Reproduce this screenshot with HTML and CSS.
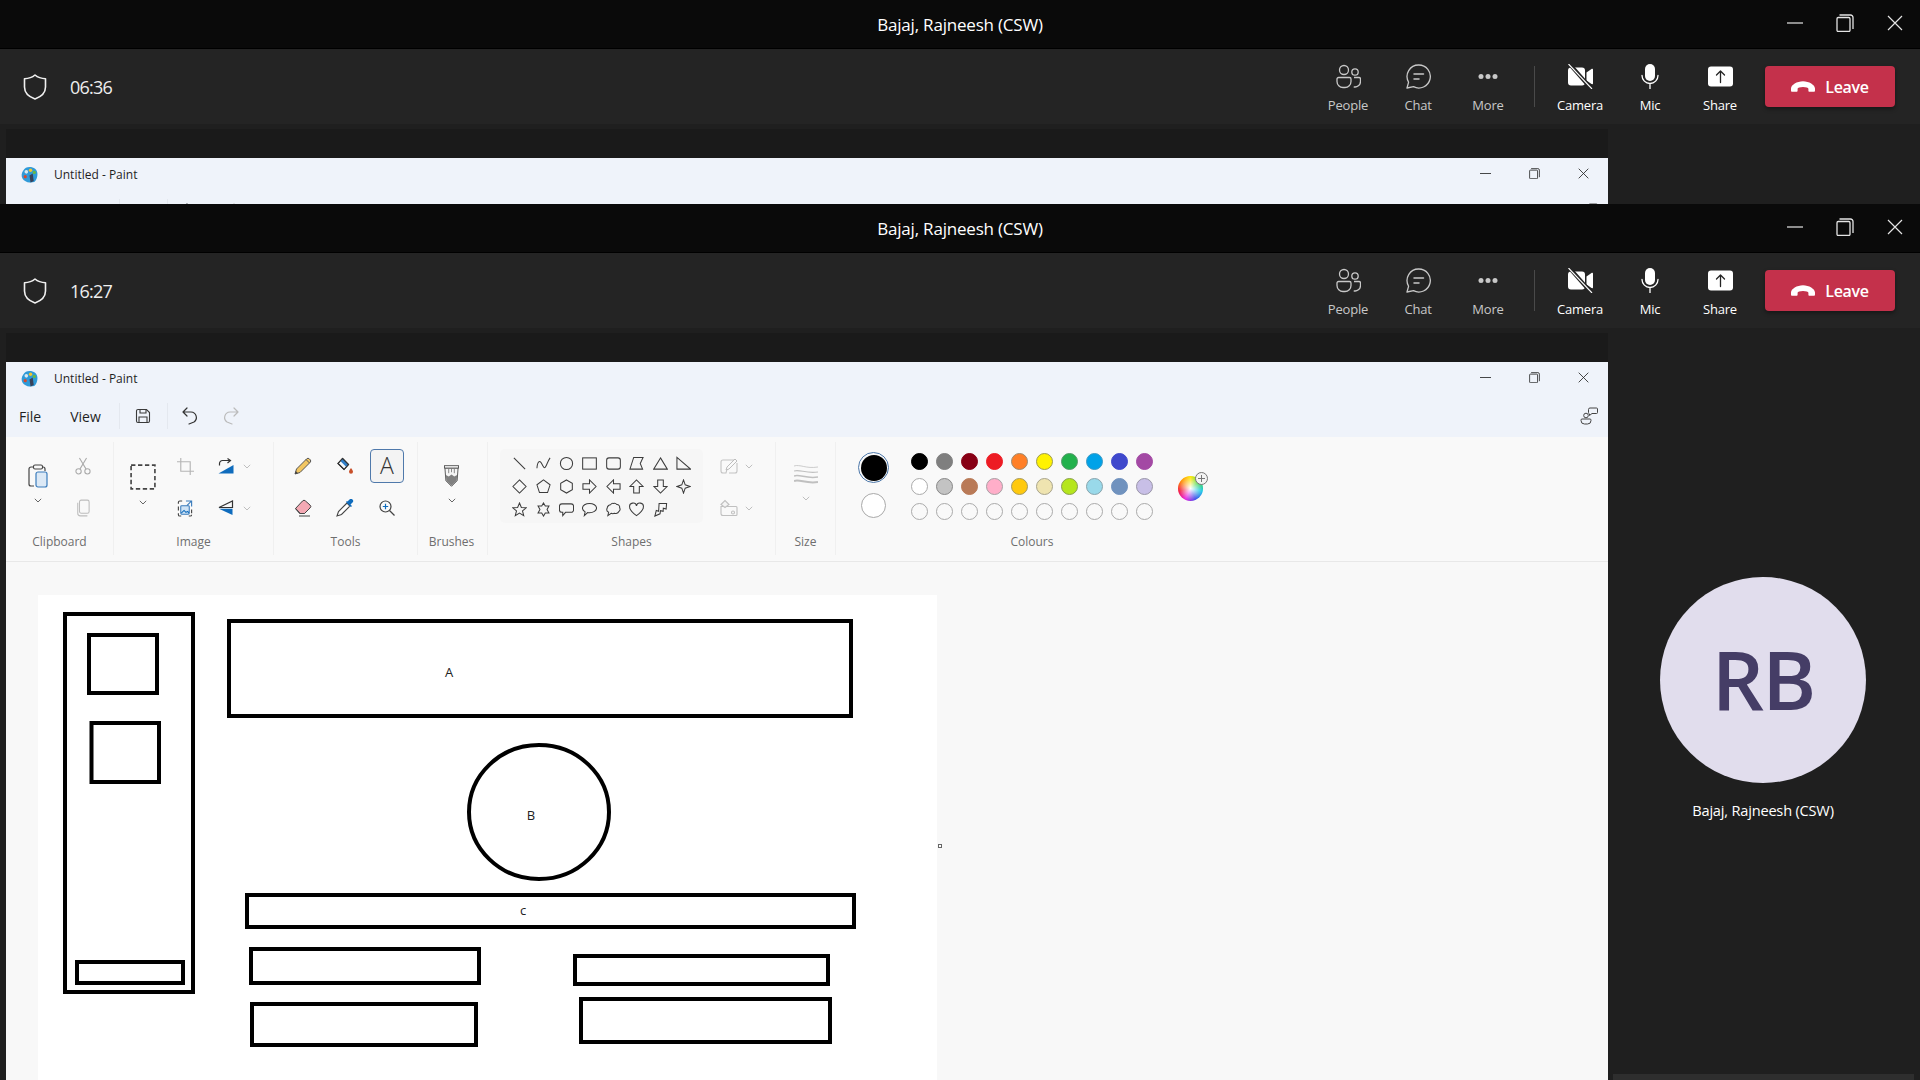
FILE: index.html
```html
<!DOCTYPE html>
<html>
<head>
  <meta charset="utf-8">
  <title>Meeting - Untitled - Paint</title>
  <link rel="stylesheet" href="styles.css">
</head>
<body>

<!-- shared icons -->
<svg class="defs" xmlns="http://www.w3.org/2000/svg">
  <symbol id="i-shield" viewBox="0 0 24 26"><path d="M12 1c3 2.600 6 3.600 10.500 3.700V13c0 6-4.500 9.800-10.500 12C6 22.800 1.500 19 1.500 13V4.700C6 4.600 9 3.600 12 1z" fill="none" stroke="currentColor" stroke-width="1.600" stroke-linejoin="round"/></symbol>
  <symbol id="i-people" viewBox="0 0 25 24"><g fill="none" stroke="currentColor" stroke-width="1.300"><circle cx="8" cy="5.500" r="4.500"/><circle cx="19" cy="7.500" r="3.200"/><path d="M2.500 13h11a1.500 1.500 0 0 1 1.500 1.500V17a6 6 0 0 1-6 6H7a6 6 0 0 1-6-6v-2.500A1.500 1.500 0 0 1 2.500 13z"/><path d="M18 13h5a1.500 1.500 0 0 1 1.500 1.500V17a5.500 5.500 0 0 1-6.800 5.300"/></g></symbol>
  <symbol id="i-chat" viewBox="0 0 25 25"><g fill="none" stroke="currentColor" stroke-width="1.300"><path d="M12.800 1a11.500 11.500 0 1 1-5.300 21.700L1 24l1.600-5.800A11.500 11.500 0 0 1 12.800 1z" stroke-linejoin="round"/><path d="M8 10h9.500M8 15h5" stroke-linecap="round" stroke-width="1.500"/></g></symbol>
  <symbol id="i-more" viewBox="0 0 24 24"><g fill="currentColor"><circle cx="5" cy="12" r="2.500"/><circle cx="12" cy="12" r="2.500"/><circle cx="19" cy="12" r="2.500"/></g></symbol>
  <symbol id="i-camera" viewBox="0 0 25 25"><path d="M3 3.500h11a3 3 0 0 1 3 3v12a3 3 0 0 1-3 3H3a3 3 0 0 1-3-3v-12a3 3 0 0 1 3-3z" fill="currentColor"/><path d="M18.500 8.500l5-3.500c.7-.4 1.500 0 1.500.8v13.400c0 .8-.8 1.200-1.500.8l-5-3.500z" fill="currentColor"/><path d="M1.500 0l22 25" stroke="#242424" stroke-width="4"/><path d="M0.500 0l23.500 25" stroke="currentColor" stroke-width="1.100"/></symbol>
  <symbol id="i-mic" viewBox="0 0 18 25"><rect x="4" y="0" width="10" height="17" rx="5" fill="currentColor"/><path d="M1 11.500a8 8 0 0 0 16 0M9 19.500V25" fill="none" stroke="currentColor" stroke-width="1.300" stroke-linecap="round"/></symbol>
  <symbol id="i-share" viewBox="0 0 25 20"><rect width="25" height="20" rx="3" fill="currentColor"/><path d="M12.500 16V5M8.500 8.500l4-4 4 4" fill="none" stroke="#242424" stroke-width="1.300" stroke-linecap="round" stroke-linejoin="round"/></symbol>
  <symbol id="i-hangup" viewBox="0 0 24 11"><path d="M1.200 10.800C.4 10.800 0 10.200 0 9.500V7.500C0 4 6 .3 12 .3S24 4 24 7.500v2c0 .7-.4 1.300-1.200 1.300h-4.300c-.8 0-1.100-.6-1.100-1.300V7.800C17.400 6.800 15 6 12 6s-5.400.8-5.400 1.800v1.700c0 .7-.3 1.300-1.100 1.300z" fill="currentColor"/></symbol>
  <symbol id="i-min" viewBox="0 0 16 16"><path d="M0 8h16" stroke="currentColor" stroke-width="1.200"/></symbol>
  <symbol id="i-restore" viewBox="0 0 18 18"><g fill="none" stroke="currentColor" stroke-width="1.300"><rect x="1" y="3.500" width="13" height="14" rx="1.200"/><path d="M3.500 1h11a2.500 2.500 0 0 1 2.500 2.500V15"/></g></symbol>
  <symbol id="i-close" viewBox="0 0 16 16"><path d="M1 1l14 14M15 1L1 15" stroke="currentColor" stroke-width="1.200"/></symbol>

  <symbol id="i-logo" viewBox="0 0 16 16"><path d="M8 1c4 0 7.500 2.500 7.500 6.500 0 2.500-1 6-3 7.500L9 15.500C6 16 3 14 1.500 12 0 9.500.5 6.500 2 4.500 3.500 2 5.500 1 8 1z" fill="#2f9ad8"/><circle cx="5" cy="5.500" r="1.700" fill="#d8e9f2"/><circle cx="9" cy="4" r="1.600" fill="#f3c52c"/><circle cx="12.500" cy="6" r="1.500" fill="#69b843"/><circle cx="4" cy="10" r="1.500" fill="#d6492f"/><path d="M8 9l3-2 1 7-3 1.500z" fill="#37425a"/></symbol>
  <symbol id="i-save" viewBox="0 0 16 16"><g fill="none" stroke="#3a3a3a" stroke-width="1.100"><path d="M3 1.500h8.500l3 3V13a1.500 1.500 0 0 1-1.500 1.500H3A1.500 1.500 0 0 1 1.500 13V3A1.500 1.500 0 0 1 3 1.500z"/><path d="M5 1.500V5h6V1.500M4 14.500V9h8v5.500"/></g></symbol>
  <symbol id="i-undo" viewBox="0 0 16 18"><path d="M5 1L1 5l4 4M1 5h8a5.500 5.500 0 0 1 3 10L7 17" fill="none" stroke="currentColor" stroke-width="1.200" stroke-linecap="round" stroke-linejoin="round"/></symbol>
  <symbol id="i-feedback" viewBox="0 0 18 18"><g fill="none" stroke="#444" stroke-width="1"><circle cx="6" cy="8.500" r="2.300"/><path d="M2 12h8a1 1 0 0 1 1 1v.5a3.500 3.500 0 0 1-3.500 3.500h-3A3.500 3.500 0 0 1 1 13.500V13a1 1 0 0 1 1-1z"/><path d="M10 1h6.500a1 1 0 0 1 1 1v3.500a1 1 0 0 1-1 1H12l-2.500 2V7A1.500 1.500 0 0 1 8.500 5.500V2.500A1.500 1.500 0 0 1 10 1z"/></g></symbol>

  <symbol id="i-paste" viewBox="0 0 20 24"><path d="M6 3H3a2 2 0 0 0-2 2v15a2 2 0 0 0 2 2h3M14 3h1a2 2 0 0 1 2 2v2" fill="none" stroke="#444" stroke-width="1.200"/><rect x="5.500" y="1" width="9" height="4" rx="1.500" fill="#f9f9f9" stroke="#444" stroke-width="1.100"/><rect x="8" y="8" width="11" height="15" rx="2" fill="#dce9f6" stroke="#3b7cbc" stroke-width="1.200"/></symbol>
  <symbol id="i-cut" viewBox="0 0 18 20"><g fill="none" stroke="#aaa" stroke-width="1.200"><circle cx="4" cy="16" r="3"/><circle cx="14" cy="16" r="3"/><path d="M5.500 13.500L13 1M12.500 13.500L5 1"/></g></symbol>
  <symbol id="i-copy" viewBox="0 0 16 20"><g fill="none" stroke="#bdbdbd" stroke-width="1.200"><rect x="4" y="1" width="11" height="15" rx="2"/><path d="M2 4v12a3 3 0 0 0 3 3h8"/></g></symbol>
  <symbol id="i-select" viewBox="0 0 24 24"><rect x="1" y="1" width="22" height="22" fill="none" stroke="#444" stroke-width="1.500" stroke-dasharray="4 2.400"/></symbol>
  <symbol id="i-crop" viewBox="0 0 18 18"><path d="M4 0v14h14M0 4h14v14" fill="none" stroke="#b5b5b5" stroke-width="1.200"/></symbol>
  <symbol id="i-rotate" viewBox="0 0 16 16"><path d="M15.500 7v8.500H.5z" fill="#0f6cbd"/><path d="M1.500 7.500V5.500a3 3 0 0 1 3-3H12M9.500 .5l3 2-3 2.500" fill="none" stroke="#333" stroke-width="1.200"/></symbol>
  <symbol id="i-resize" viewBox="0 0 16 18"><g fill="none"><path d="M1 4V2.500A1.500 1.500 0 0 1 2.500 1H5M1 7v4M15 10v4M1 14v1.500A1.500 1.500 0 0 0 2.500 17H4M12 17h1.500a1.500 1.500 0 0 0 1.500-1.500" stroke="#444" stroke-width="1.200"/><path d="M9 1h6v6M15 1l-5 5" stroke="#3b7cbc" stroke-width="1.200"/><rect x="3.500" y="6" width="9" height="9" rx="1" fill="#cfe3f5" stroke="#3b7cbc" stroke-width="1.100"/><path d="M4 14l3-3 2 2 2-1 1 2" stroke="#0f6cbd" stroke-width="1.100"/></g></symbol>
  <symbol id="i-flip" viewBox="0 0 16 16"><path d="M14.500 1v6.500H1z" fill="none" stroke="#333" stroke-width="1.200"/><path d="M14.500 15V8.800H1z" fill="#0f6cbd"/></symbol>
  <symbol id="i-pencil" viewBox="0 0 18 18"><path d="M1 17l1.500-5L12.500 2a2 2 0 0 1 3 0l.5.500a2 2 0 0 1 0 3L6 15.500z" fill="#f2c661" stroke="#555" stroke-width="1"/><path d="M1 17l.8-3 2.200 2.200z" fill="#444"/><path d="M12 2.500l3.500 3.500" stroke="#555"/></symbol>
  <symbol id="i-fill" viewBox="0 0 18 18"><path d="M6.500 1.500l6 6-4.500 5L2 6.500z" fill="#f4f8fc" stroke="#333" stroke-width="1.100"/><path d="M6.500 1.500l6 6-2.200 2.500-6-6z" fill="#2f7fc9"/><path d="M6.500 1.500l6 6-4.500 5L2 6.500z" fill="none" stroke="#333" stroke-width="1.100"/><path d="M15 11c1 1.500 2 2.700 2 3.800a2 2 0 0 1-4 0c0-1.100 1-2.300 2-3.800z" fill="#c8502a"/></symbol>
  <symbol id="i-eraser" viewBox="0 0 18 18"><path d="M1.500 9.500l7-7.500a2 2 0 0 1 3 0l4.500 4a2 2 0 0 1 0 3l-5.500 5.500H6z" fill="#f4a9b4" stroke="#444" stroke-width="1"/><path d="M1.500 9.500L6 14.500h4.500M5 17h11" fill="none" stroke="#444" stroke-width="1.100"/></symbol>
  <symbol id="i-picker" viewBox="0 0 18 18"><path d="M11 4L2.500 12.500 1 17l4.500-1.500L14 7z" fill="#fff" stroke="#444" stroke-width="1.100"/><path d="M10 3l5 5 1-1-1.500-1.500 2-2a2 2 0 0 0-3-3l-2 2L11 2z" fill="#0f6cbd"/></symbol>
  <symbol id="i-zoom" viewBox="0 0 16 16"><g fill="none" stroke="#444" stroke-width="1.200"><circle cx="6.500" cy="6.500" r="5.500"/><path d="M10.500 10.500L15.500 15.500"/></g><path d="M6.500 3.800v5.400M3.800 6.500h5.400" stroke="#0f6cbd" stroke-width="1.200"/></symbol>
  <symbol id="i-brush" viewBox="0 0 16 24"><path d="M1 3.500h14L14 17l-6 6-6-6z" fill="#f6f6f6" stroke="#555" stroke-width="1"/><path d="M2 11l3 1.500 3-2 3 2 3-1.500-.4 6L8 22.500 2.400 17z" fill="#808080"/><rect x=".5" y="1" width="15" height="2.500" fill="#fff" stroke="#555" stroke-width="1"/><path d="M5 4v5M8 4v4M11 4v5" stroke="#777" stroke-width=".9"/></symbol>
  <symbol id="i-outline" viewBox="0 0 18 16"><path d="M3 2h11l-7 9-1 4H3a2 2 0 0 1-2-2V4a2 2 0 0 1 2-2zM17 5v8a2 2 0 0 1-2 2H9" fill="none" stroke="#c4c4c4" stroke-width="1.100"/><path d="M15 1l2 2-8 8-3 1 1-3z" fill="#fafafa" stroke="#bdbdbd"/></symbol>
  <symbol id="i-shapefill" viewBox="0 0 18 17"><g fill="none" stroke="#c0c0c0" stroke-width="1.100"><path d="M1 7h15a1 1 0 0 1 1 1v7a1 1 0 0 1-1 1H3a2 2 0 0 1-2-2z"/><path d="M1 5l4-4 4 4-4 3z" fill="#f4f4f4"/><circle cx="13" cy="13" r="1.500"/></g></symbol>
  <symbol id="i-size" viewBox="0 0 24 20"><g fill="none" stroke="#c0c0c0"><path d="M0 2c6-2 12 3 24 1" stroke-width=".8"/><path d="M0 7c6-2 12 3 24 1" stroke-width="1.100"/><path d="M0 12c6-2 12 3 24 1" stroke-width="1.500"/><path d="M0 17c6-2 12 3 24 1" stroke-width="2"/></g></symbol>
  <symbol id="i-chev" viewBox="0 0 8 5"><path d="M.8.800L4 4l3.200-3.200" fill="none" stroke="currentColor" stroke-width=".9"/></symbol>

  <symbol id="s-line" viewBox="0 0 16 16"><path d="M2 2l12 12"/></symbol>
  <symbol id="s-curve" viewBox="0 0 16 16"><path d="M1 13C1.500 6 4 4 6 8s3 6 4.500 3S13 5 15 2"/></symbol>
  <symbol id="s-oval" viewBox="0 0 16 16"><circle cx="8" cy="8" r="6.500"/></symbol>
  <symbol id="s-rect" viewBox="0 0 16 16"><rect x=".7" y="2" width="14.600" height="12"/></symbol>
  <symbol id="s-round" viewBox="0 0 16 16"><rect x=".7" y="2" width="14.600" height="12" rx="2.500"/></symbol>
  <symbol id="s-poly" viewBox="0 0 16 16"><path d="M5 1.500h10l-3 6.500 2.500 6H1z"/></symbol>
  <symbol id="s-tri" viewBox="0 0 16 16"><path d="M8 2l7.300 12H.7z"/></symbol>
  <symbol id="s-right" viewBox="0 0 16 16"><path d="M1 1.500L15.500 14H1z"/></symbol>
  <symbol id="s-diamond" viewBox="0 0 16 16"><path d="M8 1l7 7-7 7-7-7z"/></symbol>
  <symbol id="s-penta" viewBox="0 0 16 16"><path d="M8 1l7 5.200-2.700 8.300H3.700L1 6.200z"/></symbol>
  <symbol id="s-hexa" viewBox="0 0 16 16"><path d="M8 1l6.200 3.500v7L8 15l-6.200-3.500v-7z"/></symbol>
  <symbol id="s-arr-r" viewBox="0 0 16 16"><path d="M1 5h7V1l7 7-7 7v-4H1z"/></symbol>
  <symbol id="s-arr-l" viewBox="0 0 16 16"><path d="M15 5H8V1L1 8l7 7v-4h7z"/></symbol>
  <symbol id="s-arr-u" viewBox="0 0 16 16"><path d="M5 15V8H1l7-7 7 7h-4v7z"/></symbol>
  <symbol id="s-arr-d" viewBox="0 0 16 16"><path d="M5 1v7H1l7 7 7-7h-4V1z"/></symbol>
  <symbol id="s-star4" viewBox="0 0 16 16"><path d="M8 1l1.800 5.200L15 8l-5.200 1.800L8 15l-1.800-5.200L1 8l5.200-1.800z"/></symbol>
  <symbol id="s-star5" viewBox="0 0 16 16"><path d="M8 1l2 4.800 5.200.4-4 3.300 1.300 5.100L8 11.900l-4.500 2.700 1.300-5.100-4-3.300L6 5.800z"/></symbol>
  <symbol id="s-star6" viewBox="0 0 16 16"><path d="M8 1l1.900 3.300h3.900l-2 3.700 2 3.700H9.900L8 15l-1.900-3.300H2.200l2-3.700-2-3.700h3.900z"/></symbol>
  <symbol id="s-say-r" viewBox="0 0 16 16"><path d="M3 2h10a2.500 2.500 0 0 1 2.500 2.500v4A2.500 2.500 0 0 1 13 11H7l-3 3.500V11H3A2.500 2.500 0 0 1 .5 8.500v-4A2.500 2.500 0 0 1 3 2z"/></symbol>
  <symbol id="s-say-o" viewBox="0 0 16 16"><path d="M8 1.500c4 0 7.500 2.200 7.500 5s-3.500 5-7.500 5c-.7 0-1.300 0-2-.2L2.500 14.500l.8-4C1.500 9.500.5 8 .5 6.500c0-2.800 3.500-5 7.500-5z"/></symbol>
  <symbol id="s-say-c" viewBox="0 0 16 16"><path d="M8 1.500c1.500-.5 3 .5 3.500 1.200 2-.2 3.500 1.800 3 3.300 1 1.500.5 3.500-1 4.300-.8 1.700-3 2.500-4.500 1.700-1 .5-2.500.5-3.500 0L2 14.500l.8-3.500C1 10 .5 8 1.300 6.500c0-2 2-3.500 3.500-3.500C5.500 2 7 1.300 8 1.500z"/></symbol>
  <symbol id="s-heart" viewBox="0 0 16 16"><path d="M8 14.500C3 11 .7 8.500.7 5.500A3.700 3.700 0 0 1 8 4.200 3.700 3.700 0 0 1 15.300 5.500c0 3-2.300 5.500-7.300 9z"/></symbol>
  <symbol id="s-bolt" viewBox="0 0 16 16"><path d="M6.500 1.500h8l-.5 6-3-.8-.2 3.300-2.800-.7-.5 3.300L2 15l1.500-6L6 9.800z"/></symbol>
</svg>

<!-- first call window, cut off by the second one -->
<section class="meeting meeting-clip">
  <header class="titlebar">
    <div class="titlebar-name">Bajaj, Rajneesh (CSW)</div>
    <div class="winbtns">
      <span class="winbtn"><svg class="ic-min"><use href="#i-min"/></svg></span>
      <span class="winbtn"><svg class="ic-restore"><use href="#i-restore"/></svg></span>
      <span class="winbtn"><svg class="ic-close"><use href="#i-close"/></svg></span>
    </div>
  </header>
  <div class="toolbar">
    <svg class="shield"><use href="#i-shield"/></svg>
    <span class="timer">06:36</span>
    <div class="actions">
      <div class="action dim"><svg class="ic-people"><use href="#i-people"/></svg><span>People</span></div>
      <div class="action dim"><svg class="ic-chat"><use href="#i-chat"/></svg><span>Chat</span></div>
      <div class="action dim"><svg class="ic-more"><use href="#i-more"/></svg><span>More</span></div>
      <div class="tb-sep"></div>
      <div class="action"><svg class="ic-camera"><use href="#i-camera"/></svg><span>Camera</span></div>
      <div class="action"><svg class="ic-mic"><use href="#i-mic"/></svg><span>Mic</span></div>
      <div class="action"><svg class="ic-share"><use href="#i-share"/></svg><span>Share</span></div>
      <div class="leave"><svg class="ic-hangup"><use href="#i-hangup"/></svg>Leave</div>
    </div>
  </div>
  <div class="stage">
    <div class="share">
      <div class="paint">
        <div class="paint-title">
          <svg class="paint-logo"><use href="#i-logo"/></svg>
          <span class="paint-name">Untitled - Paint</span>
          <div class="paint-btns">
            <span class="paint-btn"><svg class="ic-pmin"><use href="#i-min"/></svg></span>
            <span class="paint-btn"><svg class="ic-prestore"><use href="#i-restore"/></svg></span>
            <span class="paint-btn"><svg class="ic-pclose"><use href="#i-close"/></svg></span>
          </div>
        </div>
        <!-- only the tops of these icons show above the second window -->
        <div class="menubar menubar-clip">
          <span class="menu-sep"></span>
          <svg class="ic-save"><use href="#i-save"/></svg>
          <span class="menu-sep"></span>
          <svg class="ic-undo"><use href="#i-undo"/></svg>
          <svg class="ic-redo"><use href="#i-undo"/></svg>
          <svg class="ic-feedback"><use href="#i-feedback"/></svg>
        </div>
      </div>
    </div>
  </div>
</section>

<!-- second call window -->
<section class="meeting meeting-full">
  <header class="titlebar">
    <div class="titlebar-name">Bajaj, Rajneesh (CSW)</div>
    <div class="winbtns">
      <span class="winbtn"><svg class="ic-min"><use href="#i-min"/></svg></span>
      <span class="winbtn"><svg class="ic-restore"><use href="#i-restore"/></svg></span>
      <span class="winbtn"><svg class="ic-close"><use href="#i-close"/></svg></span>
    </div>
  </header>
  <div class="toolbar">
    <svg class="shield"><use href="#i-shield"/></svg>
    <span class="timer">16:27</span>
    <div class="actions">
      <div class="action dim"><svg class="ic-people"><use href="#i-people"/></svg><span>People</span></div>
      <div class="action dim"><svg class="ic-chat"><use href="#i-chat"/></svg><span>Chat</span></div>
      <div class="action dim"><svg class="ic-more"><use href="#i-more"/></svg><span>More</span></div>
      <div class="tb-sep"></div>
      <div class="action"><svg class="ic-camera"><use href="#i-camera"/></svg><span>Camera</span></div>
      <div class="action"><svg class="ic-mic"><use href="#i-mic"/></svg><span>Mic</span></div>
      <div class="action"><svg class="ic-share"><use href="#i-share"/></svg><span>Share</span></div>
      <div class="leave"><svg class="ic-hangup"><use href="#i-hangup"/></svg>Leave</div>
    </div>
  </div>
  <div class="stage">
    <div class="share">
      <div class="paint">
        <div class="paint-title">
          <svg class="paint-logo"><use href="#i-logo"/></svg>
          <span class="paint-name">Untitled - Paint</span>
          <div class="paint-btns">
            <span class="paint-btn"><svg class="ic-pmin"><use href="#i-min"/></svg></span>
            <span class="paint-btn"><svg class="ic-prestore"><use href="#i-restore"/></svg></span>
            <span class="paint-btn"><svg class="ic-pclose"><use href="#i-close"/></svg></span>
          </div>
        </div>

        <div class="menubar">
          <span class="menu-file">File</span>
          <span class="menu-view">View</span>
          <span class="menu-sep"></span>
          <svg class="ic-save"><use href="#i-save"/></svg>
          <span class="menu-sep"></span>
          <svg class="ic-undo"><use href="#i-undo"/></svg>
          <svg class="ic-redo"><use href="#i-undo"/></svg>
          <svg class="ic-feedback"><use href="#i-feedback"/></svg>
        </div>

        <div class="ribbon">
          <div class="group group-clipboard">
            <div class="group-body cols-clipboard">
              <div class="big-tool"><svg class="ic-paste"><use href="#i-paste"/></svg><svg class="chev"><use href="#i-chev"/></svg></div>
              <div class="tool"><svg class="ic-cut"><use href="#i-cut"/></svg></div>
              <div class="tool"><svg class="ic-copy"><use href="#i-copy"/></svg></div>
            </div>
            <div class="group-label">Clipboard</div>
          </div>

          <div class="group group-image">
            <div class="group-body cols-image">
              <div class="big-tool"><svg class="ic-select"><use href="#i-select"/></svg><svg class="chev"><use href="#i-chev"/></svg></div>
              <div class="tool"><svg class="ic-crop"><use href="#i-crop"/></svg></div>
              <div class="tool split"><svg class="ic-rotate"><use href="#i-rotate"/></svg><svg class="chev chev-light"><use href="#i-chev"/></svg></div>
              <div class="tool"><svg class="ic-resize"><use href="#i-resize"/></svg></div>
              <div class="tool split"><svg class="ic-rotate"><use href="#i-flip"/></svg><svg class="chev chev-light"><use href="#i-chev"/></svg></div>
            </div>
            <div class="group-label">Image</div>
          </div>

          <div class="group group-tools">
            <div class="group-body cols-tools">
              <div class="tool"><svg class="ic-tool"><use href="#i-pencil"/></svg></div>
              <div class="tool"><svg class="ic-tool"><use href="#i-fill"/></svg></div>
              <div class="tool"><span class="text-tool">A</span></div>
              <div class="tool"><svg class="ic-tool"><use href="#i-eraser"/></svg></div>
              <div class="tool"><svg class="ic-tool"><use href="#i-picker"/></svg></div>
              <div class="tool"><svg class="ic-zoom"><use href="#i-zoom"/></svg></div>
            </div>
            <div class="group-label">Tools</div>
          </div>

          <div class="group group-brushes">
            <div class="group-body cols-one">
              <div class="big-tool"><svg class="ic-brush"><use href="#i-brush"/></svg><svg class="chev"><use href="#i-chev"/></svg></div>
            </div>
            <div class="group-label">Brushes</div>
          </div>

          <div class="group group-shapes">
            <div class="group-body cols-shapes">
              <div class="shape-panel">
                <svg class="shape"><use href="#s-line"/></svg>
                <svg class="shape"><use href="#s-curve"/></svg>
                <svg class="shape"><use href="#s-oval"/></svg>
                <svg class="shape"><use href="#s-rect"/></svg>
                <svg class="shape"><use href="#s-round"/></svg>
                <svg class="shape"><use href="#s-poly"/></svg>
                <svg class="shape"><use href="#s-tri"/></svg>
                <svg class="shape"><use href="#s-right"/></svg>
                <svg class="shape"><use href="#s-diamond"/></svg>
                <svg class="shape"><use href="#s-penta"/></svg>
                <svg class="shape"><use href="#s-hexa"/></svg>
                <svg class="shape"><use href="#s-arr-r"/></svg>
                <svg class="shape"><use href="#s-arr-l"/></svg>
                <svg class="shape"><use href="#s-arr-u"/></svg>
                <svg class="shape"><use href="#s-arr-d"/></svg>
                <svg class="shape"><use href="#s-star4"/></svg>
                <svg class="shape"><use href="#s-star5"/></svg>
                <svg class="shape"><use href="#s-star6"/></svg>
                <svg class="shape"><use href="#s-say-r"/></svg>
                <svg class="shape"><use href="#s-say-o"/></svg>
                <svg class="shape"><use href="#s-say-c"/></svg>
                <svg class="shape"><use href="#s-heart"/></svg>
                <svg class="shape"><use href="#s-bolt"/></svg>
              </div>
              <div class="shape-opts">
                <div class="tool split"><svg class="ic-tool"><use href="#i-outline"/></svg><svg class="chev chev-light"><use href="#i-chev"/></svg></div>
                <div class="tool split"><svg class="ic-tool"><use href="#i-shapefill"/></svg><svg class="chev chev-light"><use href="#i-chev"/></svg></div>
              </div>
            </div>
            <div class="group-label">Shapes</div>
          </div>

          <div class="group group-size">
            <div class="group-body cols-one">
              <div class="big-tool"><svg class="ic-size"><use href="#i-size"/></svg><svg class="chev chev-light"><use href="#i-chev"/></svg></div>
            </div>
            <div class="group-label">Size</div>
          </div>

          <div class="group group-colours">
            <div class="group-body cols-colours">
              <div class="active-colours">
                <span class="colour-1"></span>
                <span class="colour-2"></span>
              </div>
              <div class="palette">
                <span class="sw c-black"></span><span class="sw c-grey"></span><span class="sw c-maroon"></span><span class="sw c-red"></span><span class="sw c-orange"></span><span class="sw c-yellow"></span><span class="sw c-green"></span><span class="sw c-sky"></span><span class="sw c-indigo"></span><span class="sw c-purple"></span>
                <span class="sw c-white"></span><span class="sw c-silver"></span><span class="sw c-brown"></span><span class="sw c-pink"></span><span class="sw c-gold"></span><span class="sw c-cream"></span><span class="sw c-lime"></span><span class="sw c-aqua"></span><span class="sw c-steel"></span><span class="sw c-lilac"></span>
                <span class="sw"></span><span class="sw"></span><span class="sw"></span><span class="sw"></span><span class="sw"></span><span class="sw"></span><span class="sw"></span><span class="sw"></span><span class="sw"></span><span class="sw"></span>
              </div>
              <div class="wheel"><span class="wheel-plus"></span></div>
            </div>
            <div class="group-label">Colours</div>
          </div>
        </div>

        <div class="workspace">
          <!-- the picture drawn in Paint, coordinates are page pixels -->
          <svg class="drawing" viewBox="6 562 1602 518">
            <rect class="sheet" x="38" y="595" width="899" height="485"/>
            <g class="ink">
              <rect x="65" y="614" width="128" height="378"/>
              <rect x="89" y="635" width="68" height="58"/>
              <rect x="91.500" y="723" width="67.500" height="59"/>
              <rect x="77" y="962" width="106" height="21"/>
              <rect x="229" y="621" width="622" height="95"/>
              <ellipse cx="539" cy="812" rx="70" ry="67"/>
              <rect x="247" y="895" width="607" height="32"/>
              <rect x="251" y="949" width="228" height="34"/>
              <rect x="252" y="1004" width="224" height="41"/>
              <rect x="575" y="956" width="253" height="28"/>
              <rect x="581" y="999" width="249" height="43"/>
            </g>
            <text class="note" x="449" y="677" text-anchor="middle">A</text>
            <text class="note" x="531" y="820" text-anchor="middle">B</text>
            <text class="note" x="523" y="915" text-anchor="middle">c</text>
            <rect class="handle" x="938.500" y="844.500" width="3" height="3"/>
          </svg>
        </div>
      </div>
    </div>

    <aside class="roster">
      <div class="avatar">RB</div>
      <div class="roster-name">Bajaj, Rajneesh (CSW)</div>
      <div class="roster-foot"></div>
    </aside>
  </div>
</section>

</body>
</html>
```
FILE: styles.css
```css
* {
  box-sizing: border-box;
}

html, body {
  margin: 0;
  height: 100%;
}

body {
  width: 1920px;
  height: 1080px;
  overflow: hidden;
  display: flex;
  flex-direction: column;
  background: #1f1f1f;
  font-family: "Open Sans", "Liberation Sans", sans-serif;
}

svg {
  display: block;
}

.defs {
  position: absolute;
  width: 0;
  height: 0;
}

/* meeting window */
.meeting {
  display: flex;
  flex-direction: column;
  overflow: hidden;
}

.meeting-clip {
  height: 204px;
  flex: none;
}

.meeting-full {
  height: 876px;
  flex: none;
}

.titlebar {
  position: relative;
  height: 49px;
  flex: none;
  background: #0a0a0a;
  border-bottom: 1px solid #000;
  display: flex;
  align-items: center;
  justify-content: center;
}

.titlebar-name {
  color: #fff;
  font-size: 17px;
  letter-spacing: -0.200px;
}

.winbtns {
  position: absolute;
  right: 0;
  top: 0;
  bottom: 0;
  display: flex;
  color: #e4e4e4;
}

.winbtn {
  width: 50px;
  display: flex;
  align-items: center;
  justify-content: center;
}

.ic-min { width: 16px; height: 16px; margin-top: -3px; }
.ic-restore { width: 18px; height: 18px; margin-top: -3px; }
.ic-close { width: 16px; height: 16px; margin-top: -3px; }

.toolbar {
  height: 75px;
  flex: none;
  background: #242424;
  display: flex;
  align-items: center;
  color: #fff;
}

.shield {
  width: 24px;
  height: 26px;
  margin-left: 23px;
  color: #f0f0f0;
}

.timer {
  margin-left: 23px;
  font-size: 18px;
  letter-spacing: -0.800px;
  color: #eee;
}

.actions {
  margin-left: auto;
  padding-right: 25px;
  display: flex;
  align-items: center;
}

.action {
  width: 70px;
  height: 70px;
  padding-top: 12px;
  display: flex;
  flex-direction: column;
  align-items: center;
  color: #fff;
  font-size: 13px;
  letter-spacing: -0.200px;
}

.action.dim {
  color: #c8c8c8;
}

.action svg {
  height: 25px;
  flex: none;
  margin-bottom: 7px;
}

.action span {
  line-height: 18px;
}

.ic-people, .ic-chat, .ic-camera { width: 25px; }
.ic-more { width: 24px; }
.ic-mic { width: 18px; }
.ic-share { width: 25px; }

.tb-sep {
  width: 1px;
  height: 41px;
  background: #4a4a4a;
  margin: 0 10px 0 11px;
}

.leave {
  margin-left: 10px;
  width: 130px;
  height: 41px;
  background: #c4314b;
  border-radius: 4px;
  box-shadow: 0 2px 4px rgba(0, 0, 0, 0.4);
  color: #fff;
  font-size: 16px;
  font-weight: 600;
  letter-spacing: -0.300px;
  display: flex;
  align-items: center;
  justify-content: center;
  gap: 10px;
}

.ic-hangup {
  width: 24px;
  height: 11px;
}

/* shared screen area */
.stage {
  flex: 1;
  min-height: 0;
  display: flex;
  background: #1f1f1f;
  padding-left: 6px;
}

.share {
  width: 1602px;
  flex: none;
  margin-top: 5px;
  padding-top: 29px;
  background: #1a1a1a;
  display: flex;
  flex-direction: column;
}

.paint {
  flex: 1;
  display: flex;
  flex-direction: column;
  background: #eff3fa;
  color: #1f1f1f;
}

.paint-title {
  height: 33px;
  flex: none;
  display: flex;
  align-items: center;
}

.paint-logo {
  width: 17px;
  height: 17px;
  margin-left: 15px;
}

.paint-name {
  margin-left: 16px;
  font-size: 12px;
}

.paint-btns {
  margin-left: auto;
  margin-top: -2px;
  display: flex;
  color: #222;
}

.paint-btn {
  width: 49px;
  display: flex;
  align-items: center;
  justify-content: center;
}

.ic-pmin { width: 11px; height: 11px; }
.ic-prestore { width: 11px; height: 11px; }
.ic-pclose { width: 11px; height: 11px; }

.menubar {
  height: 42px;
  flex: none;
  display: flex;
  align-items: center;
  font-size: 14px;
  padding-left: 13px;
}

.menubar-clip {
  padding-left: 113px;
}

.menu-view {
  margin-left: 29px;
}

.menu-sep {
  width: 1px;
  height: 26px;
  background: #e4e8ef;
}

.menu-view + .menu-sep {
  margin-left: 18px;
}

.ic-save {
  width: 16px;
  height: 16px;
  margin: 0 16px 0 15px;
}

.ic-undo {
  width: 16px;
  height: 18px;
  margin-left: 14px;
  color: #333;
}

.ic-redo {
  width: 16px;
  height: 18px;
  margin-left: 25px;
  color: #bbb;
  transform: scaleX(-1);
}

.ic-feedback {
  width: 18px;
  height: 18px;
  margin-left: auto;
  margin-right: 10px;
}

/* ribbon */
.ribbon {
  height: 125px;
  flex: none;
  display: flex;
  background: #f9f9f9;
  border-bottom: 1px solid #e8e8e8;
  padding-top: 5px;
}

.group {
  height: 113px;
  flex: none;
  display: flex;
  flex-direction: column;
  padding-top: 3px;
  border-right: 1px solid #f0f0f0;
}

.group-clipboard { width: 108px; }
.group-image { width: 160px; }
.group-tools { width: 144px; }
.group-brushes { width: 70px; padding-right: 2px; }
.group-shapes { width: 288px; }
.group-size { width: 60px; }
.group-colours { width: 392px; border-right: 0; }

.group-body {
  height: 88px;
  flex: none;
}

.group-label {
  text-align: center;
  font-size: 12px;
  line-height: 17px;
  color: #6e6e6e;
}

.cols-clipboard {
  display: grid;
  grid-template-columns: 52px 38px;
  grid-template-rows: 42px 42px;
  padding-left: 6px;
}

.cols-image {
  display: grid;
  grid-template-columns: 42px 42px 60px;
  grid-template-rows: 42px 42px;
  padding-left: 8px;
}

.cols-tools {
  display: grid;
  grid-template-columns: 42px 42px 42px;
  grid-template-rows: 42px 42px;
  padding-left: 8px;
}

.cols-one {
  display: flex;
  justify-content: center;
}

.big-tool {
  grid-row: span 2;
  display: flex;
  flex-direction: column;
  align-items: center;
  color: #555;
}

.big-tool svg:first-child {
  margin-top: 19px;
}

.chev {
  width: 8px;
  height: 5px;
  margin-top: 10px;
  flex: none;
}

.tool {
  display: flex;
  align-items: center;
  justify-content: center;
}

.tool.split {
  justify-content: flex-start;
  padding-left: 12px;
}

.chev-light {
  color: #b8b8b8;
}

.tool.split .chev {
  margin: 0 0 0 9px;
}

.ic-paste { width: 20px; height: 24px; }
.ic-cut { width: 16px; height: 18px; }
.ic-copy { width: 14px; height: 18px; }
.ic-select { width: 26px; height: 26px; }
.ic-crop { width: 17px; height: 17px; }
.ic-rotate { width: 16px; height: 16px; flex: none; }
.ic-resize { width: 16px; height: 17px; }
.ic-tool { width: 18px; height: 18px; flex: none; }
.ic-zoom { width: 16px; height: 16px; }
.ic-brush { width: 15px; height: 24px; }
.ic-size { width: 24px; height: 20px; }

.big-tool .ic-select { margin-top: 18px; }
.big-tool .ic-size { margin-top: 21px; }
.big-tool .ic-size + .chev { margin-top: 12px; }

.text-tool {
  width: 34px;
  height: 34px;
  border: 1px solid #4f79ab;
  border-radius: 4px;
  background: #f3f3f3;
  font-size: 23px;
  font-weight: 300;
  line-height: 31px;
  text-align: center;
  color: #333;
}

.cols-shapes {
  display: flex;
  padding-left: 12px;
}

.shape-panel {
  width: 203px;
  height: 74px;
  margin-top: 4px;
  padding: 2.500px 8px;
  background: #f6f6f6;
  border-radius: 5px;
  display: grid;
  grid-template-columns: repeat(8, 23.400px);
  grid-auto-rows: 23px;
  place-items: center;
}

.shape {
  width: 15px;
  height: 15px;
  fill: none;
  stroke: #3c3c3c;
  stroke-width: 1.100;
}

.shape-opts {
  width: 48px;
  margin-left: 17px;
  display: grid;
  grid-template-rows: 42px 42px;
}

.shape-opts .tool.split {
  padding-left: 0;
}

.shape-opts .tool.split .chev {
  margin-left: 7px;
}

.cols-colours {
  display: flex;
  padding-left: 17px;
}

.active-colours {
  width: 40px;
  padding-top: 6.500px;
  display: flex;
  flex-direction: column;
  align-items: center;
  gap: 10px;
}

.colour-1 {
  width: 31px;
  height: 31px;
  border-radius: 50%;
  background: #000 content-box;
  border: 1.500px solid #4f79ab;
  padding: 1.500px;
}

.colour-2 {
  width: 25px;
  height: 25px;
  border-radius: 50%;
  background: #fff;
  border: 1px solid #a9a9a9;
}

.palette {
  width: 251px;
  margin-left: 13.500px;
  padding-top: 4px;
  display: grid;
  grid-template-columns: repeat(10, 25.100px);
  grid-auto-rows: 25.200px;
  place-items: center;
}

.sw {
  width: 17px;
  height: 17px;
  border-radius: 50%;
  border: 1px solid #aaa;
  background: transparent;
}

.c-black { background: #000; border-color: #000; }
.c-grey { background: #7f7f7f; border-color: #7f7f7f; }
.c-maroon { background: #880015; border-color: #880015; }
.c-red { background: #ed1c24; border-color: #ed1c24; }
.c-orange { background: #ff7f27; border-color: #9c8a70; }
.c-yellow { background: #fff200; border-color: #9c9a50; }
.c-green { background: #22b14c; border-color: #55996a; }
.c-sky { background: #00a2e8; border-color: #3c9ac4; }
.c-indigo { background: #3f48cc; border-color: #3f48cc; }
.c-purple { background: #a349a4; border-color: #a349a4; }
.c-white { background: #fff; }
.c-silver { background: #c3c3c3; border-color: #888; }
.c-brown { background: #b97a57; border-color: #b97a57; }
.c-pink { background: #ffaec9; border-color: #a8a0a4; }
.c-gold { background: #ffc90e; border-color: #a69a60; }
.c-cream { background: #efe4b0; border-color: #a8a48c; }
.c-lime { background: #b5e61d; border-color: #8aa050; }
.c-aqua { background: #99d9ea; border-color: #88a4ac; }
.c-steel { background: #7092be; border-color: #7092be; }
.c-lilac { background: #c8bfe7; border-color: #9a96a8; }

.wheel {
  position: relative;
  width: 25px;
  height: 25px;
  margin: 31px 0 0 20px;
  border-radius: 50%;
  background:
    radial-gradient(circle, #fff 0, rgba(255, 255, 255, 0) 70%),
    conic-gradient(#ffe600, #38d530, #16c8e6, #3a49e8, #e61fe0, #f3123a, #ff8a00, #ffe600);
}

.wheel-plus {
  position: absolute;
  top: -4px;
  right: -5px;
  width: 13px;
  height: 13px;
  border: 1px solid #777;
  border-radius: 50%;
  background:
    linear-gradient(#777, #777) center / 7px 1px no-repeat,
    linear-gradient(#777, #777) center / 1px 7px no-repeat,
    #f4f4f4;
}

/* canvas */
.workspace {
  flex: 1;
  min-height: 0;
  background: #f8f8f8;
}

.drawing {
  width: 1602px;
  height: 518px;
}

.sheet {
  fill: #fff;
}

.ink {
  fill: none;
  stroke: #000;
  stroke-width: 4;
}

.note {
  font-size: 13px;
  fill: #222;
}

.handle {
  fill: #fff;
  stroke: #666;
  stroke-width: 1;
}

/* participant panel */
.roster {
  flex: 1;
  position: relative;
  display: flex;
  flex-direction: column;
  align-items: center;
  padding-top: 249px;
  padding-right: 2px;
}

.avatar {
  width: 206px;
  height: 206px;
  border-radius: 50%;
  background: #e1dded;
  color: #453d66;
  font-size: 82px;
  font-weight: 600;
  padding-bottom: 4px;
  display: flex;
  align-items: center;
  justify-content: center;
  letter-spacing: -2px;
}

.roster-name {
  margin-top: 17px;
  color: #fff;
  font-size: 14.600px;
  letter-spacing: -0.200px;
}

.roster-foot {
  position: absolute;
  left: 5px;
  right: 6px;
  bottom: 0;
  height: 6px;
  background: #2e2e2e;
}
```
